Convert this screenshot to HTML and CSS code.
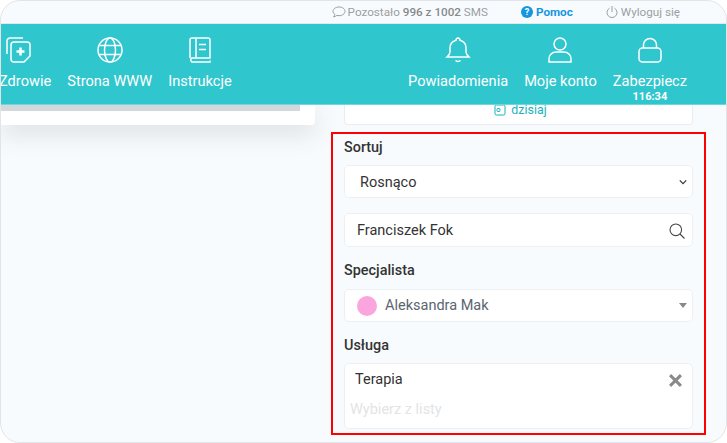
FILE: index.html
```html
<!DOCTYPE html>
<html lang="pl">
  <head>
    <meta charset="UTF-8" />
    <title>Panel</title>
    <link rel="stylesheet" href="styles.css">
  </head>
  <body>
    <div class="window">
      <div class="topbar">
        <div class="top-item">
          <svg class="top-icon" viewBox="0 0 14 14" fill="none" stroke="#9a9fa3"><path d="M7 2C3.700 2 1 3.900 1 6.300c0 1.200.7 2.300 1.800 3.100-.1.900-.6 1.800-1.300 2.400 1.300-.1 2.500-.6 3.400-1.400.7.2 1.400.3 2.100.3 3.300 0 6-1.900 6-4.400S10.300 2 7 2z"/></svg>
          <span>Pozostało <b>996 z 1002</b> SMS</span>
        </div>
        <div class="top-item top-help">
          <svg class="top-icon" viewBox="0 0 14 14"><circle cx="7" cy="7" r="6" fill="#1496e0"/><text x="7" y="10" text-anchor="middle" class="help-mark">?</text></svg>
          <span>Pomoc</span>
        </div>
        <div class="top-item">
          <svg class="top-icon" viewBox="0 0 14 14" fill="none" stroke="#9a9fa3"><path d="M4.500 3.200a5 5 0 1 0 5 0M7 1v6"/></svg>
          <span>Wyloguj się</span>
        </div>
      </div>

      <nav class="nav">
        <div class="nav-group">
          <a class="nav-item nav-first">
            <svg viewBox="0 0 26 26" fill="none" stroke="#fff" stroke-width="1.500"><path d="M1 17V4a3 3 0 0 1 3-3h13"/><path d="M8 5h13a3 3 0 0 1 3 3v11l-6 6H8a3 3 0 0 1-3-3V8a3 3 0 0 1 3-3z"/><path d="M14.500 10.500v8M10.500 14.500h8" stroke-width="2.500"/></svg>
            Zdrowie
          </a>
          <a class="nav-item">
            <svg viewBox="0 0 26 26" fill="none" stroke="#fff" stroke-width="1.500"><circle cx="13" cy="13" r="12"/><ellipse cx="13" cy="13" rx="5.500" ry="12"/><path d="M2.500 8.500h21M2.500 17.500h21"/></svg>
            Strona WWW
          </a>
          <a class="nav-item">
            <svg viewBox="0 0 26 26" fill="none" stroke="#fff" stroke-width="1.500"><path d="M3 21V3a2 2 0 0 1 2-2h16a2 2 0 0 1 2 2v18H5a2.200 2.200 0 0 0 0 4h18v-1.500"/><path d="M9 1v20M12 7.500h7M12 12.500h7"/></svg>
            Instrukcje
          </a>
        </div>
        <div class="nav-group">
          <a class="nav-item">
            <svg viewBox="0 0 26 26" fill="none" stroke="#fff" stroke-width="1.500"><path d="M13 1a2 2 0 0 1 2 2.300c3.800.9 6 4 6 8v3.700c0 2 1.500 3.600 3 5H2c1.500-1.400 3-3 3-5v-3.700c0-4.300 2.200-7.100 6-8A2 2 0 0 1 13 1z"/><path d="M10.500 23.500a3 2 0 0 0 5 0"/></svg>
            Powiadomienia
          </a>
          <a class="nav-item">
            <svg viewBox="0 0 26 26" fill="none" stroke="#fff" stroke-width="1.500"><circle cx="13" cy="7" r="6"/><path d="M2 25v-3c0-4 3-7 7-7h8c4 0 7 3 7 7v3z"/></svg>
            Moje konto
          </a>
          <a class="nav-item">
            <svg viewBox="0 0 26 26" fill="none" stroke="#fff" stroke-width="1.500"><rect x="2" y="11" width="22" height="14" rx="3.500"/><path d="M6.500 11V8a6.500 6.500 0 0 1 13 0v3"/></svg>
            Zabezpiecz
            <span class="nav-time">116:34</span>
          </a>
        </div>
      </nav>

      <main class="content">
        <section class="left-card">
          <div class="left-bar"></div>
        </section>

        <aside class="side">
          <div class="today-card">
            <svg class="today-icon" viewBox="0 0 12 12" fill="none" stroke="#17b3bc"><rect x="1" y="0" width="10" height="10" rx="1.500"/><rect x="3" y="3.500" width="3" height="3" rx="1"/></svg>
            dzisiaj
          </div>

          <div class="filters">
            <div class="filter-label">Sortuj</div>
            <div class="field field-sort">
              Rosnąco
              <svg class="chevron" viewBox="0 0 10 6" fill="none" stroke="#333" stroke-width="1.500"><path d="M1 1l4 4 4-4"/></svg>
            </div>

            <div class="field field-search">
              Franciszek Fok
              <svg class="search-icon" viewBox="0 0 16 16" fill="none" stroke="#444" stroke-width="1.100"><circle cx="6.800" cy="6.800" r="5.800"/><path d="M11 11l4.500 4.500"/></svg>
            </div>

            <div class="filter-label label-spec">Specjalista</div>
            <div class="field field-person">
              <span class="person-dot"></span>
              Aleksandra Mak
              <span class="caret"></span>
            </div>

            <div class="filter-label label-service">Usługa</div>
            <div class="field-multi">
              <div class="chosen">
                Terapia
                <svg class="remove" viewBox="0 0 12 12" fill="none" stroke="#8a8a8a" stroke-width="2.800"><path d="M1 1l10 10M11 1L1 11"/></svg>
              </div>
              <div class="placeholder">Wybierz z listy</div>
            </div>
          </div>
        </aside>
      </main>
    </div>
  </body>
</html>
```

FILE: styles.css
```css
* {
  box-sizing: border-box;
}

html,
body {
  margin: 0;
  height: 100%;
  background-color: #fff;
  overflow: hidden;
}

body {
  font-family: Roboto, "Liberation Sans", sans-serif;
  color: #333;
}

.window {
  width: 727px;
  height: 443px;
  border: 1px solid #e2e5e7;
  border-radius: 20px;
  background-color: #f8fbfd;
  overflow: hidden;
}

/* top strip */
.topbar {
  height: 22px;
  display: flex;
  justify-content: flex-end;
  align-items: center;
  gap: 32px;
  padding-right: 46px;
  font-size: 11.7px;
  color: #9a9fa3;
}

.top-item {
  display: flex;
  align-items: center;
  gap: 2px;
}

.top-item b {
  font-weight: 500;
  color: #85898c;
}

.top-icon {
  width: 14px;
  height: 14px;
}

.top-help {
  color: #1496e0;
  font-weight: 700;
}

.help-mark {
  font-size: 9px;
  font-weight: 700;
  fill: #fff;
}

/* main menu */
.nav {
  position: relative;
  z-index: 2;
  height: 82px;
  display: flex;
  justify-content: space-between;
  background-color: #30c6ce;
  border-top: 1px solid #dcebed;
  border-bottom: 1px solid #6fd7dc;
  padding: 13px 39px 0 0;
}

.nav-group {
  display: flex;
  gap: 16px;
}

.nav-item {
  display: flex;
  flex-direction: column;
  align-items: center;
  color: #fff;
  font-size: 14.6px;
  line-height: 18px;
}

.nav-item svg {
  width: 26px;
  height: 26px;
  margin-bottom: 9px;
}

.nav-first {
  margin-left: -2px;
}

.nav-first svg {
  margin-right: 12px;
}

.nav-time {
  margin-top: 1px;
  font-size: 11px;
  font-weight: 700;
  line-height: 12px;
}

/* page content */
.content {
  display: flex;
  align-items: flex-start;
  gap: 16px;
}

.left-card {
  width: 314px;
  height: 20px;
  background-color: #fff;
  border-radius: 0 0 4px 0;
  box-shadow: 0 8px 24px rgba(60, 70, 80, 0.16);
}

.left-bar {
  width: 299px;
  height: 6px;
  background-color: #d3d8dc;
}

.side {
  width: 375px;
}

.today-card {
  height: 20px;
  margin: 0 13px 7px;
  padding-left: 4px;
  display: flex;
  justify-content: center;
  align-items: flex-start;
  gap: 5px;
  line-height: 10px;
  font-size: 12.4px;
  color: #17b3bc;
  background-color: #fff;
  border: 1px solid #e9edef;
  border-top: 0;
  border-radius: 0 0 4px 4px;
}

.today-icon {
  width: 12px;
  height: 12px;
  flex: none;
}

.filters {
  height: 303px;
  padding: 5px 11px 0;
  border: 2px solid #f00;
}

.filter-label {
  font-size: 14.4px;
  font-weight: 500;
  line-height: 18px;
  color: #333;
}

.field,
.field-multi {
  background-color: #fff;
  border: 1px solid #edf0f2;
  border-radius: 5px;
}

.field {
  display: flex;
  align-items: center;
  font-size: 14.5px;
}

.field-sort {
  height: 33px;
  margin-top: 8px;
  padding: 1px 5px 0 15px;
  justify-content: space-between;
}

.chevron {
  width: 8px;
  height: 6px;
}

.field-search {
  height: 34px;
  margin-top: 15px;
  padding: 1px 7px 0 12px;
  justify-content: space-between;
}

.search-icon {
  width: 16px;
  height: 16px;
}

.label-spec {
  margin-top: 15px;
}

.field-person {
  height: 33px;
  margin-top: 9px;
  padding: 0 5px 0 12px;
  color: #5a6570;
}

.person-dot {
  width: 20px;
  height: 20px;
  border-radius: 50%;
  background-color: #fba4de;
  margin-right: 8px;
}

.caret {
  margin-left: auto;
  border-left: 4px solid transparent;
  border-right: 4px solid transparent;
  border-top: 5px solid #888;
}

.label-service {
  margin-top: 15px;
}

.field-multi {
  height: 66px;
  margin-top: 8px;
}

.chosen {
  display: flex;
  justify-content: space-between;
  align-items: center;
  padding: 7px 10px 0 10px;
  font-size: 14.5px;
  line-height: 18px;
}

.remove {
  width: 13px;
  height: 13px;
}

.placeholder {
  padding: 12px 0 0 5px;
  font-size: 14.5px;
  line-height: 18px;
  color: #e3e4e5;
}
```
